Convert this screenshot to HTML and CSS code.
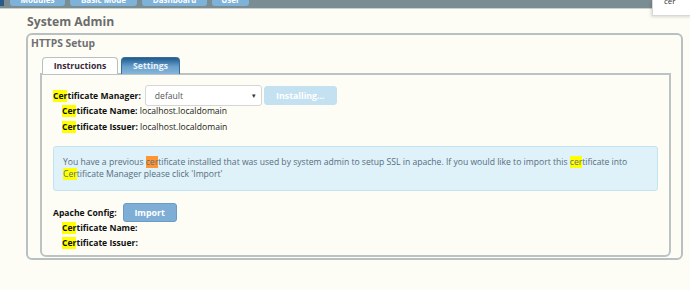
FILE: index.html
```html
<!DOCTYPE html>
<html lang="en">
<head>
    <meta charset="UTF-8" />
    <title>System Admin</title>
    <link rel="stylesheet" href="styles.css">
</head>
<body>
    <nav class="topbar">
        <span class="nav-corner"></span>
        <a class="nav-btn nav-1">Modules</a>
        <a class="nav-btn nav-2">Basic Mode</a>
        <a class="nav-btn nav-3">Dashboard</a>
        <a class="nav-btn nav-4">User</a>
    </nav>
    <div class="find-popup">cer</div>

    <h2 class="page-title">System Admin</h2>

    <fieldset class="setup">
        <legend>HTTPS Setup</legend>
        <div class="tabs">
            <a class="tab">Instructions</a>
            <a class="tab active">Settings</a>
        </div>
        <div class="panel">
            <div class="row">
                <span class="label"><mark>Cer</mark>tificate Manager:</span>
                <div class="select"><span>default</span><span class="caret">&#9662;</span></div>
                <button class="btn disabled">Installing...</button>
            </div>
            <div class="sub"><span class="label"><mark>Cer</mark>tificate Name:</span> localhost.localdomain</div>
            <div class="sub"><span class="label"><mark>Cer</mark>tificate Issuer:</span> localhost.localdomain</div>

            <div class="info">
                You have a previous <mark class="current">cer</mark>tificate installed that was used by system admin to setup SSL in apache. If you would like to import this <mark>cer</mark>tificate into <mark>Cer</mark>tificate Manager please click 'Import'
            </div>

            <div class="row apache">
                <span class="label">Apache Config:</span>
                <button class="btn">Import</button>
            </div>
            <div class="sub small"><span class="label"><mark>Cer</mark>tificate Name:</span></div>
            <div class="sub small"><span class="label"><mark>Cer</mark>tificate Issuer:</span></div>
        </div>
    </fieldset>
</body>
</html>
```

FILE: styles.css
```css
/* Grundlayout */
* {
    box-sizing: border-box;
}
body {
    margin: 0;
    background: #fdfdf6;
    font-family: "Open Sans", "Noto Sans", sans-serif;
    font-size: 8.6px;
    color: #222;
    position: relative;
    height: 290px;
    overflow: hidden;
}

/* Navigation oben */
.topbar {
    height: 9px;
    background: #7a8d93;
    border-bottom: 1px solid #c9d0d0;
    display: flex;
    align-items: flex-start;
    padding-left: 10px;
    gap: 5px;
    overflow: hidden;
}
.nav-corner {
    position: absolute;
    left: 0;
    top: 0;
    width: 4px;
    height: 6px;
    background: #2a5a86;
}
.nav-btn {
    height: 6px;
    background: #7eb2d9;
    border-radius: 0 0 3px 3px;
    color: #fff;
    font-weight: 700;
    font-size: 8px;
    line-height: 0;
    text-align: center;
    overflow: hidden;
}
.nav-1 { width: 55px; }
.nav-2 { width: 67px; }
.nav-3 { width: 65px; }
.nav-4 { width: 37px; }

.find-popup {
    position: absolute;
    top: 0;
    left: 652px;
    width: 40px;
    height: 16px;
    background: #fff;
    border-left: 1px solid #d8d8d8;
    border-bottom: 1px solid #d8d8d8;
    box-shadow: -1px 1px 3px rgba(0,0,0,0.15);
    font-size: 8px;
    line-height: 1px;
    padding-left: 11px;
    color: #333;
}

/* Überschrift */
.page-title {
    margin: 4px 0 0 27px;
    font-size: 12.2px;
    font-weight: 700;
    color: #6c6c6c;
    line-height: 18px;
}

/* Rahmen */
.setup {
    margin: 2px 8px 0 26px;
    width: 657px;
    height: 227px;
    border: 2px solid #b8c0c2;
    border-radius: 6px;
    padding: 0 10px 0 12px;
    position: relative;
}
.setup legend {
    position: absolute;
    top: 1px;
    left: 3px;
    padding: 0;
    font-size: 10.3px;
    font-weight: 700;
    color: #707070;
}
.tabs {
    display: flex;
    gap: 3px;
    padding: 22px 0 0 2px;
    height: 39px;
}
.tab {
    width: 76px;
    height: 17px;
    border: 1px solid #b8c0c2;
    border-bottom: none;
    border-radius: 4px 4px 0 0;
    background: #fefefc;
    font-weight: 700;
    font-size: 8.7px;
    line-height: 17px;
    text-align: center;
    color: #3a2a3a;
    position: relative;
    z-index: 1;
}
.tab.active {
    width: 59px;
    background: linear-gradient(#1e5a8e, #6aa0cc 55%, #86b6da);
    border-color: #3a6e9a;
    color: #e8f2fa;
}
.panel {
    height: 184px;
    border: 2px solid #bcc3c5;
    border-radius: 0 0 6px 6px;
    margin-top: -1px;
    padding: 10px 0 0 11px;
}

/* Zeilen */
.row {
    display: flex;
    align-items: center;
    height: 21px;
    margin-bottom: -2px;
}
.label {
    font-weight: 700;
    color: #111;
}
.row .label {
    margin-right: 4px;
}
.select {
    width: 117px;
    height: 21px;
    border: 1px solid #d6d6d6;
    border-radius: 3px;
    background: #fff;
    color: #555;
    padding: 0 5px 0 9px;
    display: flex;
    align-items: center;
    justify-content: space-between;
}
.caret {
    font-size: 7px;
    color: #333;
}
.btn {
    height: 19px;
    margin-left: 2px;
    padding: 0;
    border: 1px solid #6a9cc6;
    border-radius: 3px;
    background: #7eaed6;
    color: #fff;
    font-family: inherit;
    font-weight: 700;
    font-size: 8.8px;
}
.btn.disabled {
    width: 73px;
    background: #c3e1f1;
    border-color: #c3e1f1;
}
.sub {
    padding-left: 9px;
    line-height: 15.5px;
}
.sub.small {
    line-height: 15px;
}
mark {
    background: #ffff00;
    color: inherit;
}
mark.current {
    background: #ff9632;
}

/* Hinweis */
.info {
    margin: 11px 11px 0 0;
    height: 45px;
    background: #dff1f9;
    border: 1px solid #c4e3f0;
    border-radius: 3px;
    color: #566e80;
    padding: 9px 8px 0 9px;
    line-height: 12px;
}
.apache {
    margin-top: 12px;
    margin-bottom: -1px;
    height: 19px;
}
.apache .btn {
    width: 54px;
}
```
